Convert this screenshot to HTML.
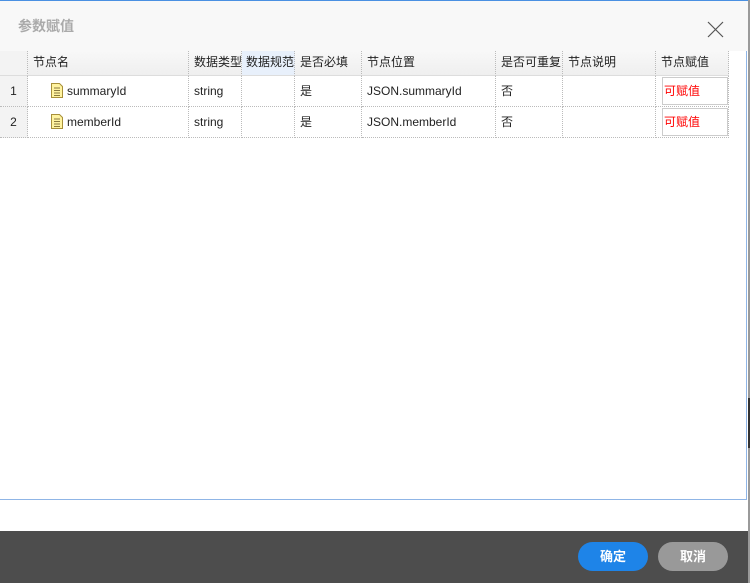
<!DOCTYPE html>
<html><head><meta charset="utf-8"><style>
body{margin:0;width:750px;height:583px;position:relative;overflow:hidden;background:#fff;font-family:"Liberation Sans","Noto Sans CJK SC",sans-serif;font-size:12px;color:#222}
.top{position:absolute;left:0;top:0;width:748px;height:1px;background:#4a90e2}
.hd{position:absolute;left:0;top:1px;width:748px;height:50px;background:#f8f8f8}
.title{position:absolute;left:18px;top:16px;font-size:14px;font-weight:bold;color:#aaa}
.close{position:absolute;left:707px;top:21px}
.side{position:absolute;left:748px;top:0;width:2px;height:583px;background:#9a9a9a}
.side2{position:absolute;left:748px;top:398px;width:2px;height:50px;background:#333}
.box{position:absolute;left:0;top:51px;width:746px;height:448px;border-right:1px solid #8fb5e6;border-bottom:1px solid #8fb5e6}
.foot{position:absolute;left:0;top:531px;width:748px;height:52px;background:#4d4d4d}
.btn{position:absolute;top:542px;width:70px;height:29px;border-radius:15px;color:#fff;font-weight:bold;font-size:13px;text-align:center;line-height:29px}
.c{position:absolute;box-sizing:border-box;border-right:1px dotted #bbb;border-bottom:1px dotted #bbb;padding-left:5px;white-space:nowrap;overflow:hidden}
.h{top:51px;height:25px;line-height:23px;background:linear-gradient(#f8f8f8,#efefef);border-bottom:1px solid #ddd}
.r1{top:76px;height:31px;line-height:30px}
.r2{top:107px;height:31px;line-height:30px}
.n{background:#f3f3f3;text-align:center;padding:0}
.ic{display:inline-block;width:12px;height:15px;vertical-align:-3px;margin-right:4px}
.v{position:absolute;left:662px;width:66px;height:28px;border:1px solid #ccc;box-sizing:border-box;color:#f00;line-height:26px;padding-left:1px;background:#fff}
</style></head><body>
<div class="hd"></div><div class="top"></div>
<div class="title">参数赋值</div>
<svg class="close" width="17" height="17"><path d="M1 1L16 16M16 1L1 16" stroke="#555" stroke-width="1.2"/></svg>
<div class="box"></div>
<div class="c h n" style="left:0;width:28px"></div>
<div class="c h" style="left:28px;width:161px">节点名</div>
<div class="c h" style="left:189px;width:53px">数据类型</div>
<div class="c h" style="left:242px;width:53px;background:#e8f0fb;padding-left:4px">数据规范</div>
<div class="c h" style="left:295px;width:67px">是否必填</div>
<div class="c h" style="left:362px;width:134px">节点位置</div>
<div class="c h" style="left:496px;width:67px">是否可重复</div>
<div class="c h" style="left:563px;width:93px">节点说明</div>
<div class="c h" style="left:656px;width:73px">节点赋值</div>

<div class="c r1 n" style="left:0;width:28px">1</div>
<div class="c r1" style="left:28px;width:161px;padding-left:23px"><svg class="ic" viewBox="0 0 12 15"><path d="M0.5 0.5H8.5L11.5 3.5V14.5H0.5Z" fill="#fff3a0" stroke="#a8903a"/><path d="M3 5H9M3 7.5H9M3 10H9M3 12.5H9" stroke="#8a7a40"/></svg>summaryId</div>
<div class="c r1" style="left:189px;width:53px">string</div>
<div class="c r1" style="left:242px;width:53px"></div>
<div class="c r1" style="left:295px;width:67px">是</div>
<div class="c r1" style="left:362px;width:134px">JSON.summaryId</div>
<div class="c r1" style="left:496px;width:67px">否</div>
<div class="c r1" style="left:563px;width:93px"></div>
<div class="c r1" style="left:656px;width:73px"></div>
<div class="v" style="top:77px">可赋值</div>

<div class="c r2 n" style="left:0;width:28px">2</div>
<div class="c r2" style="left:28px;width:161px;padding-left:23px"><svg class="ic" viewBox="0 0 12 15"><path d="M0.5 0.5H8.5L11.5 3.5V14.5H0.5Z" fill="#fff3a0" stroke="#a8903a"/><path d="M3 5H9M3 7.5H9M3 10H9M3 12.5H9" stroke="#8a7a40"/></svg>memberId</div>
<div class="c r2" style="left:189px;width:53px">string</div>
<div class="c r2" style="left:242px;width:53px"></div>
<div class="c r2" style="left:295px;width:67px">是</div>
<div class="c r2" style="left:362px;width:134px">JSON.memberId</div>
<div class="c r2" style="left:496px;width:67px">否</div>
<div class="c r2" style="left:563px;width:93px"></div>
<div class="c r2" style="left:656px;width:73px"></div>
<div class="v" style="top:108px">可赋值</div>

<div class="foot"></div>
<div class="btn" style="left:578px;background:#1e84e8">确定</div>
<div class="btn" style="left:658px;background:#999">取消</div>
<div class="side"></div><div class="side2"></div>
</body></html>
